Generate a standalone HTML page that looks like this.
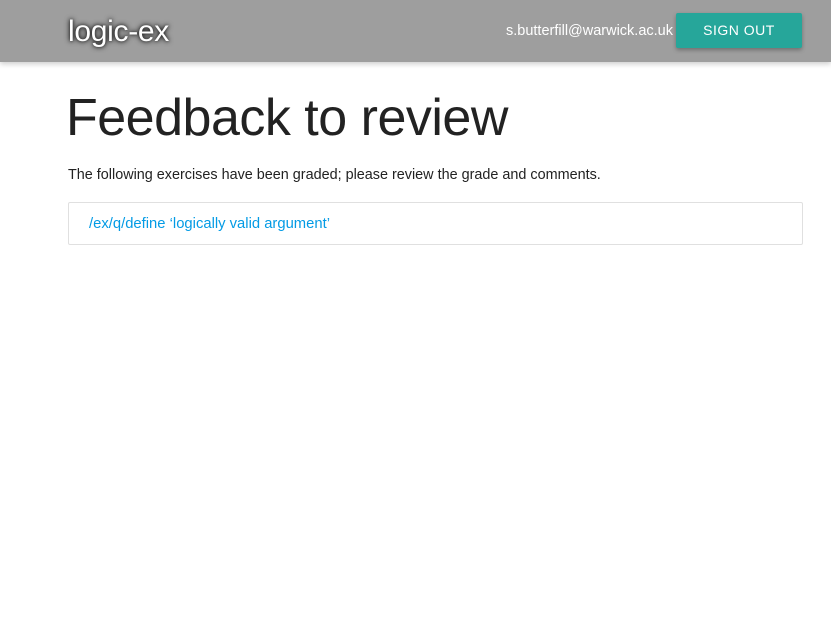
<!DOCTYPE html>
<html><head><meta charset="utf-8">
<style>
*{margin:0;padding:0;box-sizing:border-box}
body{width:831px;height:633px;background:#fff;font-family:"Liberation Sans",sans-serif;position:relative;overflow:hidden}
.nav{position:absolute;left:0;top:0;width:831px;height:62px;background:#9e9e9e;box-shadow:0 2px 5px rgba(0,0,0,.2)}
.logo{position:absolute;left:68px;top:15px;font-size:30px;color:#fff;text-shadow:0 0 6px #000,0 0 3px rgba(0,0,0,.6);letter-spacing:-0.3px}
.email{position:absolute;right:158px;top:23px;font-size:14.5px;color:#fff}
.btn{position:absolute;left:676px;top:13px;width:126px;height:35px;background:#26a69a;color:#fff;font-size:14px;text-align:center;line-height:35px;letter-spacing:.5px;box-shadow:0 2px 4px rgba(0,0,0,.3);border-radius:2px}
h1{position:absolute;left:66px;top:88px;font-size:52px;font-weight:normal;color:#222;letter-spacing:-0.5px}
p{position:absolute;left:68px;top:167px;font-size:14.4px;color:#222}
.box{position:absolute;left:68px;top:202px;width:735px;height:43px;border:1px solid #e0e0e0;border-radius:2px}
.box a{position:absolute;left:20px;top:13px;font-size:14.8px;color:#039be5;text-decoration:none}
</style></head><body>
<div class="nav">
<div class="logo">logic-ex</div>
<div class="email">s.butterfill@warwick.ac.uk</div>
<div class="btn">SIGN OUT</div>
</div>
<h1>Feedback to review</h1>
<p>The following exercises have been graded; please review the grade and comments.</p>
<div class="box"><a>/ex/q/define ‘logically valid argument’</a></div>
</body></html>
